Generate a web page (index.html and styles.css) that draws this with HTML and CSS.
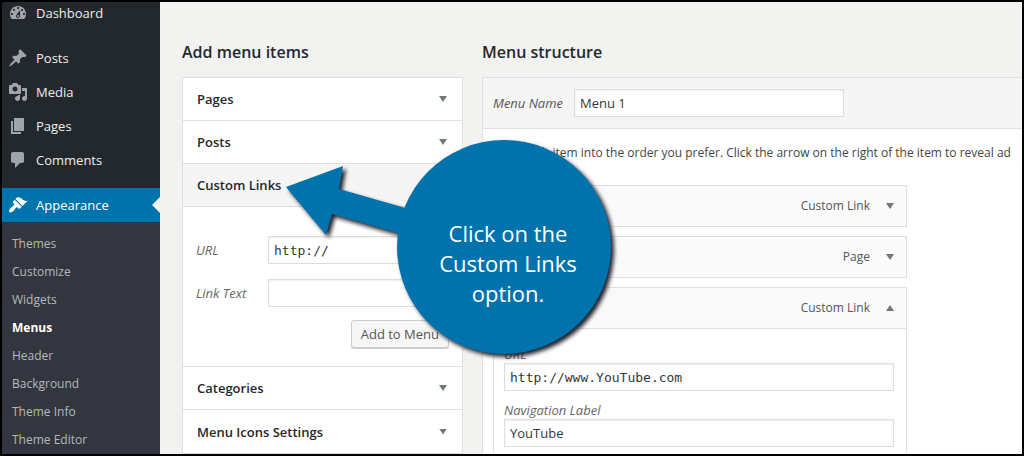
FILE: index.html
```html
<!DOCTYPE html>
<html lang="en">
<head>
<meta charset="utf-8">
<title>Menus</title>
<link rel="stylesheet" href="styles.css">
</head>
<body>
<div class="frame">
  <nav class="sidebar" aria-label="Admin menu">
    <ul class="menu">
      <li><a class="menu-link" href="#"><svg class="icon" viewBox="0 0 20 20"><path fill-rule="evenodd" d="M3.76 16h12.48c1.1-1.37 1.76-3.11 1.76-5 0-4.42-3.58-8-8-8s-8 3.58-8 8c0 1.89.66 3.63 1.76 5zM10 4c.55 0 1 .45 1 1s-.45 1-1 1-1-.45-1-1 .45-1 1-1zM6 6c.55 0 1 .45 1 1s-.45 1-1 1-1-.45-1-1 .45-1 1-1zm8 0c.55 0 1 .45 1 1s-.45 1-1 1-1-.45-1-1 .45-1 1-1zm-5.37 5.55L12 7v6c0 1.1-.9 2-2 2s-2-.9-2-2c0-.57.24-1.08.63-1.45zM4 10c.55 0 1 .45 1 1s-.45 1-1 1-1-.45-1-1 .45-1 1-1zm12 0c.55 0 1 .45 1 1s-.45 1-1 1-1-.45-1-1 .45-1 1-1zm-5 3c0-.55-.45-1-1-1s-1 .45-1 1 .45 1 1 1 1-.45 1-1z"/></svg>Dashboard</a></li>
      <li class="group-start"><a class="menu-link" href="#"><svg class="icon" viewBox="0 0 20 20"><path d="M10.44 3.02l1.82-1.82 6.36 6.35-1.83 1.82c-1.05-.68-2.48-.57-3.41.36l-.75.75c-.92.93-1.04 2.35-.35 3.41l-1.83 1.82-2.41-2.41-2.8 2.79c-.42.42-3.38 2.71-3.8 2.29s1.86-3.39 2.28-3.81l2.79-2.79L4.1 9.36l1.83-1.82c1.05.69 2.48.57 3.4-.36l.75-.75c.93-.92 1.05-2.35.36-3.41z"/></svg>Posts</a></li>
      <li><a class="menu-link" href="#"><svg class="icon" viewBox="0 0 20 20"><path fill-rule="evenodd" d="M13 11V4c0-.55-.45-1-1-1h-1.67L9 1H5L3.67 3H2c-.55 0-1 .45-1 1v7c0 .55.45 1 1 1h10c.55 0 1-.45 1-1zM7 4.500c1.380 0 2.500 1.120 2.500 2.500S8.380 9.500 7 9.500 4.500 8.380 4.500 7 5.620 4.500 7 4.500zM14 6h5v10.500c0 1.380-1.120 2.500-2.500 2.500S14 17.880 14 16.500s1.120-2.500 2.500-2.500c.17 0 .34.02.5.05V9h-3V6zm-4 8.050V13h2v3.500c0 1.380-1.120 2.500-2.500 2.500S7 17.880 7 16.500 8.120 14 9.500 14c.17 0 .34.02.5.05z"/></svg>Media</a></li>
      <li><a class="menu-link" href="#"><svg class="icon" viewBox="0 0 20 20"><path d="M6 15V2h10v13H6zm-1 1h8v2H3V5h2v11z"/></svg>Pages</a></li>
      <li><a class="menu-link" href="#"><svg class="icon" viewBox="0 0 20 20"><path d="M5 2h9c1.100 0 2 .9 2 2v7c0 1.100-.9 2-2 2h-2l-5 5v-5H5c-1.100 0-2-.9-2-2V4c0-1.100.9-2 2-2z"/></svg>Comments</a></li>
      <li class="group-start"><a class="menu-link current" href="#"><svg class="icon" viewBox="0 0 20 20"><path d="M14.480 11.060L7.410 3.990l1.500-1.500c.5-.56 2.300-.47 3.510.32 1.210.8 1.430 1.280 2.910 2.100 1.180.64 2.450 1.260 4.450.85zm-.71.71L6.700 4.700 4.930 6.470c-.39.39-.39 1.020 0 1.410l1.060 1.060c.39.39.39 1.030 0 1.420-.6.6-1.430 1.110-2.210 1.690-.35.26-.7.53-1.010.84C1.430 14.230.4 16.080 1.400 17.070c.99 1 2.840-.03 4.180-1.360.31-.31.58-.66.85-1.020.57-.78 1.080-1.610 1.690-2.210.39-.39 1.020-.39 1.410 0l1.060 1.060c.39.39 1.020.39 1.410 0z"/></svg>Appearance</a></li>
    </ul>
    <ul class="submenu">
      <li><a href="#">Themes</a></li>
      <li><a href="#">Customize</a></li>
      <li><a href="#">Widgets</a></li>
      <li><a class="active" href="#">Menus</a></li>
      <li><a href="#">Header</a></li>
      <li><a href="#">Background</a></li>
      <li><a href="#">Theme Info</a></li>
      <li><a href="#">Theme Editor</a></li>
    </ul>
  </nav>

  <main class="content">
    <section class="items">
      <h2>Add menu items</h2>
      <div class="accordion">
        <button class="section-title" type="button">Pages<span class="caret"></span></button>
        <button class="section-title" type="button">Posts<span class="caret"></span></button>
        <button class="section-title open" type="button">Custom Links<span class="caret up"></span></button>
        <form class="link-form">
          <div class="field"><label for="link-url">URL</label><input class="mono" id="link-url" type="text" value="http://"></div>
          <div class="field"><label for="link-text">Link Text</label><input id="link-text" type="text"></div>
          <button class="add" type="button">Add to Menu</button>
        </form>
        <button class="section-title" type="button">Categories<span class="caret"></span></button>
        <button class="section-title" type="button">Menu Icons Settings<span class="caret"></span></button>
      </div>
    </section>

    <section class="structure">
      <h2>Menu structure</h2>
      <div class="panel">
        <div class="panel-head"><label for="menu-name">Menu Name</label><input id="menu-name" type="text" value="Menu 1"></div>
        <div class="panel-body">
          <p class="hint">Drag each item into the order you prefer. Click the arrow on the right of the item to reveal ad</p>
          <ul class="menu-items">
            <li class="menu-item">Custom Link<span class="caret"></span></li>
            <li class="menu-item">Page<span class="caret"></span></li>
            <li class="menu-item">Custom Link<span class="caret up"></span></li>
          </ul>
          <div class="settings">
            <label for="item-url">URL</label>
            <input class="mono" id="item-url" type="text" value="http://www.YouTube.com">
            <label for="item-label">Navigation Label</label>
            <input id="item-label" type="text" value="YouTube">
          </div>
        </div>
      </div>
    </section>
  </main>

  <aside class="callout">
    <svg class="callout-shape" viewBox="0 0 336 226" aria-hidden="true">
      <path d="M0 49L57 28L53 51L130 73L122 98L46 76L40 97Z"/>
      <circle cx="218" cy="109" r="107"/>
    </svg>
    <p class="callout-text">Click on the<br>Custom Links<br>option.</p>
  </aside>
</div>
</body>
</html>
```
FILE: styles.css
```css
* { box-sizing: border-box; }

body {
  margin: 0;
  background: #f2f2f1;
  color: #444;
  font: 13px/20px "Open Sans", "Noto Sans", sans-serif;
}

ul, p, h2 { margin: 0; padding: 0; list-style: none; }
a { color: inherit; text-decoration: none; }
input, button { font: inherit; color: inherit; }

.frame {
  position: relative;
  display: flex;
  height: 100vh;
  overflow: hidden;
  border: 2px solid #000;
}

/* Sidebar */
.sidebar {
  flex: none;
  width: 158px;
  background: #23282d;
  color: #eee;
}
.menu { margin-top: -6px; }
.group-start { padding-top: 11px; }
.menu-link {
  display: flex;
  align-items: center;
  gap: 8px;
  height: 34px;
  padding-left: 6px;
}
.icon { width: 20px; height: 20px; fill: #a0a5aa; }
.current {
  position: relative;
  background: #0073ad;
  color: #fff;
}
.current .icon { fill: #fff; }
.current::after {
  content: "";
  position: absolute;
  right: 0;
  top: 9px;
  border: 8px solid transparent;
  border-right-color: #f2f2f1;
  border-left-width: 0;
}
.submenu {
  padding: 8px 10px;
  background: #33363e;
  color: #b4b9be;
  font-size: 12px;
  line-height: 28px;
}
.submenu a { display: block; }
.submenu .active { color: #fff; font-weight: 700; }

/* Main columns */
.content {
  flex: 1;
  display: flex;
  gap: 19px;
  min-width: 0;
  padding: 38px 0 0 22px;
}
.items { flex: none; width: 281px; }
.structure { flex: 1; min-width: 0; }
h2 {
  margin-bottom: 13px;
  color: #23282d;
  font-size: 16px;
  font-weight: 600;
  line-height: 24px;
}

.caret {
  width: 8px;
  height: 6px;
  background: #72777c;
  clip-path: polygon(0 0, 100% 0, 50% 100%);
}
.caret.up { clip-path: polygon(50% 0, 100% 100%, 0 100%); }

input {
  height: 28px;
  min-width: 0;
  padding: 0 5px;
  border: 1px solid #ddd;
  background: #fff;
  color: #32373c;
  box-shadow: inset 0 1px 2px rgba(0, 0, 0, .07);
}
.mono { font-family: "DejaVu Sans Mono", monospace; }
label { color: #666; font-style: italic; }

/* Accordion */
.accordion { border: 1px solid #dfdfdf; background: #fff; }
.section-title {
  display: flex;
  align-items: center;
  justify-content: space-between;
  width: 100%;
  height: 43px;
  padding: 0 15px 0 14px;
  border: 0;
  border-bottom: 1px solid #dfdfdf;
  background: #fff;
  color: #23282d;
  font-weight: 600;
}
.section-title:last-child { border-bottom: 0; }
.section-title.open { background: #f5f5f5; }
.link-form {
  display: flex;
  flex-direction: column;
  padding: 29px 13px 18px;
  border-bottom: 1px solid #dfdfdf;
}
.field {
  display: grid;
  grid-template-columns: 72px 1fr;
  align-items: center;
}
.field + .field { margin: 15px 0 13px; }
.add {
  align-self: flex-end;
  height: 28px;
  padding: 0 9px;
  border: 1px solid #ccc;
  border-radius: 3px;
  background: #f7f7f7;
  box-shadow: 0 1px 0 #ccc;
  color: #555;
}

/* Menu structure */
.panel {
  border: 1px solid #dfdfdf;
  border-right: 0;
  background: #fff;
}
.panel-head {
  display: flex;
  align-items: center;
  gap: 11px;
  height: 51px;
  padding-left: 10px;
  border-bottom: 1px solid #dfdfdf;
  background: #f5f5f5;
}
.panel-head label { color: #555; }
.panel-head input { width: 270px; }
.panel-body { padding: 14px 0 0 10px; }
.hint { white-space: nowrap; font-size: 12px; }
.menu-items {
  display: grid;
  gap: 9px;
  max-width: 414px;
  margin-top: 22px;
}
.menu-item {
  display: flex;
  align-items: center;
  justify-content: flex-end;
  gap: 16px;
  height: 42px;
  padding-right: 12px;
  border: 1px solid #dfdfdf;
  background: #fafafa;
  color: #555;
  font-size: 12px;
}
.settings {
  display: flex;
  flex-direction: column;
  max-width: 414px;
  height: 180px;
  padding: 16px 12px 0 10px;
  border: 1px solid #e2e2e2;
  border-top: 0;
}
.settings label { line-height: 18px; }
.settings input + label { margin-top: 10px; }

/* Callout */
.callout {
  position: absolute;
  left: 284px;
  top: 136px;
  width: 336px;
}
.callout-shape {
  display: block;
  overflow: visible;
  fill: #0073ad;
  filter: drop-shadow(3px 3px 2px #1d1d28);
}
.callout-text {
  position: absolute;
  left: 122px;
  right: 14px;
  top: 80px;
  color: #fff;
  font-size: 22px;
  line-height: 30px;
  text-align: center;
}
```
